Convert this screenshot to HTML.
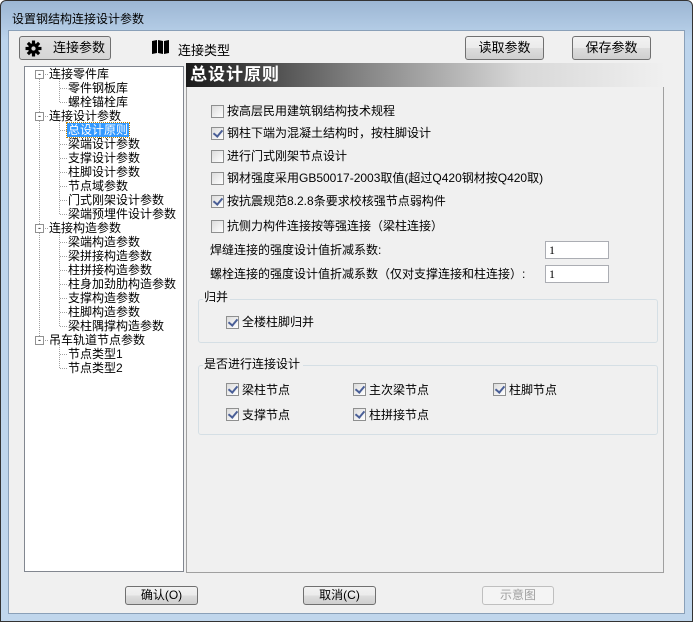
<!DOCTYPE html>
<html><head><meta charset="utf-8"><style>
*{margin:0;padding:0;box-sizing:border-box}
body{width:693px;height:622px;overflow:hidden;background:#fff;font-family:"Liberation Sans","Noto Sans CJK SC","WenQuanYi Zen Hei",sans-serif;font-size:12px;color:#000;position:relative}
.abs{position:absolute}
.win{left:0;top:0;width:693px;height:622px;border:1px solid #333;border-radius:6px 6px 0 0;background:linear-gradient(#9cb6d3,#bcd4ec 40px,#c0d6ec);}
.client{left:8px;top:30px;width:677px;height:584px;background:#f0f0f0;border:1px solid #8aa0b8}
.btn{position:absolute;border:1px solid #707070;border-radius:3px;background:linear-gradient(#f2f2f2,#ebebeb 50%,#dddddd 51%,#cfcfcf);text-align:center;line-height:21px;font-size:12px}
.tree{left:24px;top:66px;width:160px;height:506px;background:#fff;border:1px solid #828790}
.ti{position:absolute;white-space:nowrap;line-height:14px;height:14px}
.pm{position:absolute;width:9px;height:9px;border:1px solid #919191;background:#fff;font-size:9px;line-height:6px;text-align:center}
.cb{position:absolute;width:13px;height:13px;border:1px solid #8e8f8f;background:linear-gradient(135deg,#dcdcdc,#fff)}
.cb.on::after{content:"";position:absolute;left:3px;top:0px;width:4px;height:7px;border:solid #4a5f97;border-width:0 2px 2px 0;transform:rotate(40deg)}
.lb{position:absolute;white-space:nowrap;line-height:14px}
.grp{position:absolute;border:1px solid #d5dfe5;border-radius:3px}
.inp{position:absolute;background:#fff;border:1px solid #abadb3;width:64px;height:18px;font-family:"Liberation Serif",serif;font-size:12px;padding-left:3px;line-height:16px}
</style></head><body>
<div class="abs win"></div>
<div class="abs" style="left:12px;top:10px;font-size:12px">设置钢结构连接设计参数</div>
<div class="abs client"></div>

<div class="btn" style="left:19px;top:36px;width:92px;height:24px;background:linear-gradient(#e0e0e0,#d6d6d6);line-height:22px;text-align:left;padding-left:33px;font-size:13px">连接参数</div>
<svg class="abs" style="left:25px;top:40px" width="17" height="17" viewBox="0 0 16 16"><g fill="#000"><circle cx="8" cy="8" r="5"/><rect x="6.5" y="0.5" width="3" height="15"/><rect x="0.5" y="6.5" width="15" height="3"/><rect x="6.5" y="0.5" width="3" height="15" transform="rotate(45 8 8)"/><rect x="6.5" y="0.5" width="3" height="15" transform="rotate(-45 8 8)"/></g><circle cx="8" cy="8" r="2" fill="#d8d8d8"/></svg>
<svg class="abs" style="left:152px;top:40px" width="17" height="14" viewBox="0 0 17 14"><path d="M0 1 L5 0 L5 13 L0 14Z M6 0 L11 1 L11 14 L6 13Z M12 1 L17 0 L17 13 L12 14Z" fill="#000"/></svg>
<div class="abs" style="left:178px;top:40px;font-size:13px">连接类型</div>
<div class="btn" style="left:465px;top:36px;width:79px;height:24px;font-size:13px">读取参数</div>
<div class="btn" style="left:572px;top:36px;width:79px;height:24px;font-size:13px">保存参数</div>

<div class="abs tree"></div>
<svg class="abs" style="left:24px;top:66px" width="160" height="506">
<g stroke="#a0a0a0" stroke-dasharray="1,1" fill="none">
<line x1="15.5" y1="13" x2="15.5" y2="279"/>
<line x1="35.5" y1="13" x2="35.5" y2="36"/>
<line x1="35.5" y1="55" x2="35.5" y2="148"/>
<line x1="35.5" y1="167" x2="35.5" y2="260"/>
<line x1="35.5" y1="279" x2="35.5" y2="302"/>
</g></svg>
<div id="t"></div>

<div class="abs" style="left:186px;top:63px;width:480px;height:24px;background:linear-gradient(90deg,#1a1a1a,#808080 35%,#d8d8d8 70%,#f0f0f0)"></div>
<div class="abs" style="left:190px;top:64px;color:#fff;font-size:17px;font-weight:bold;letter-spacing:1px;line-height:22px">总设计原则</div>
<div class="abs" style="left:186px;top:87px;width:478px;height:486px;border:1px solid #a0a0a0;border-top:none"></div>

<div class="cb" style="left:211px;top:105px"></div><div class="lb" style="left:227px;top:104px">按高层民用建筑钢结构技术规程</div>
<div class="cb on" style="left:211px;top:127px"></div><div class="lb" style="left:227px;top:126px">钢柱下端为混凝土结构时，按柱脚设计</div>
<div class="cb" style="left:211px;top:150px"></div><div class="lb" style="left:227px;top:149px">进行门式刚架节点设计</div>
<div class="cb" style="left:211px;top:172px"></div><div class="lb" style="left:227px;top:171px">钢材强度采用GB50017-2003取值(超过Q420钢材按Q420取)</div>
<div class="cb on" style="left:211px;top:195px"></div><div class="lb" style="left:227px;top:194px">按抗震规范8.2.8条要求校核强节点弱构件</div>
<div class="cb" style="left:211px;top:220px"></div><div class="lb" style="left:227px;top:219px">抗侧力构件连接按等强连接（梁柱连接）</div>
<div class="lb" style="left:210px;top:243px">焊缝连接的强度设计值折减系数:</div>
<div class="inp" style="left:545px;top:241px">1</div>
<div class="lb" style="left:210px;top:267px">螺栓连接的强度设计值折减系数（仅对支撑连接和柱连接）:</div>
<div class="inp" style="left:545px;top:265px">1</div>

<div class="grp" style="left:198px;top:299px;width:460px;height:44px"></div>
<div class="lb" style="left:203px;top:290px;background:#f0f0f0;padding:0 2px 0 1px">归并</div>
<div class="cb on" style="left:226px;top:316px"></div><div class="lb" style="left:242px;top:315px">全楼柱脚归并</div>

<div class="grp" style="left:198px;top:365px;width:460px;height:70px"></div>
<div class="lb" style="left:203px;top:357px;background:#f0f0f0;padding:0 3px 0 1px">是否进行连接设计</div>
<div class="cb on" style="left:226px;top:383px"></div><div class="lb" style="left:242px;top:383px">梁柱节点</div>
<div class="cb on" style="left:353px;top:383px"></div><div class="lb" style="left:369px;top:383px">主次梁节点</div>
<div class="cb on" style="left:493px;top:383px"></div><div class="lb" style="left:509px;top:383px">柱脚节点</div>
<div class="cb on" style="left:226px;top:408px"></div><div class="lb" style="left:242px;top:408px">支撑节点</div>
<div class="cb on" style="left:353px;top:408px"></div><div class="lb" style="left:369px;top:408px">柱拼接节点</div>

<div class="btn" style="left:125px;top:586px;width:73px;height:19px;line-height:17px">确认(O)</div>
<div class="btn" style="left:303px;top:586px;width:73px;height:19px;line-height:17px">取消(C)</div>
<div class="btn" style="left:482px;top:586px;width:72px;height:19px;line-height:17px;border-color:#bfbfbf;background:#f4f4f4;color:#a0a0a0">示意图</div>

<script>
var items=[[1,"连接零件库"],[2,"零件钢板库"],[2,"螺栓锚栓库"],[1,"连接设计参数"],[2,"总设计原则",1],[2,"梁端设计参数"],[2,"支撑设计参数"],[2,"柱脚设计参数"],[2,"节点域参数"],[2,"门式刚架设计参数"],[2,"梁端预埋件设计参数"],[1,"连接构造参数"],[2,"梁端构造参数"],[2,"梁拼接构造参数"],[2,"柱拼接构造参数"],[2,"柱身加劲肋构造参数"],[2,"支撑构造参数"],[2,"柱脚构造参数"],[2,"梁柱隅撑构造参数"],[1,"吊车轨道节点参数"],[2,"节点类型1"],[2,"节点类型2"]];
var h="";
items.forEach(function(it,i){var y=67+i*14;
if(it[0]==1){h+='<div class="pm" style="left:35px;top:'+(y+3)+'px">-</div><div class="abs" style="left:45px;top:'+(y+7)+'px;width:3px;border-top:1px dotted #a0a0a0"></div><div class="ti" style="left:49px;top:'+y+'px">'+it[1]+'</div>';}
else{h+='<div class="abs" style="left:60px;top:'+(y+7)+'px;width:7px;border-top:1px dotted #a0a0a0"></div><div class="ti" style="left:67px;top:'+y+'px;padding:0 1px;'+(it[2]?'background:#3399ff;color:#fff;outline:1px dotted #c08000;':'')+'">'+it[1]+'</div>';}
});
document.getElementById("t").innerHTML=h;
</script>
</body></html>
